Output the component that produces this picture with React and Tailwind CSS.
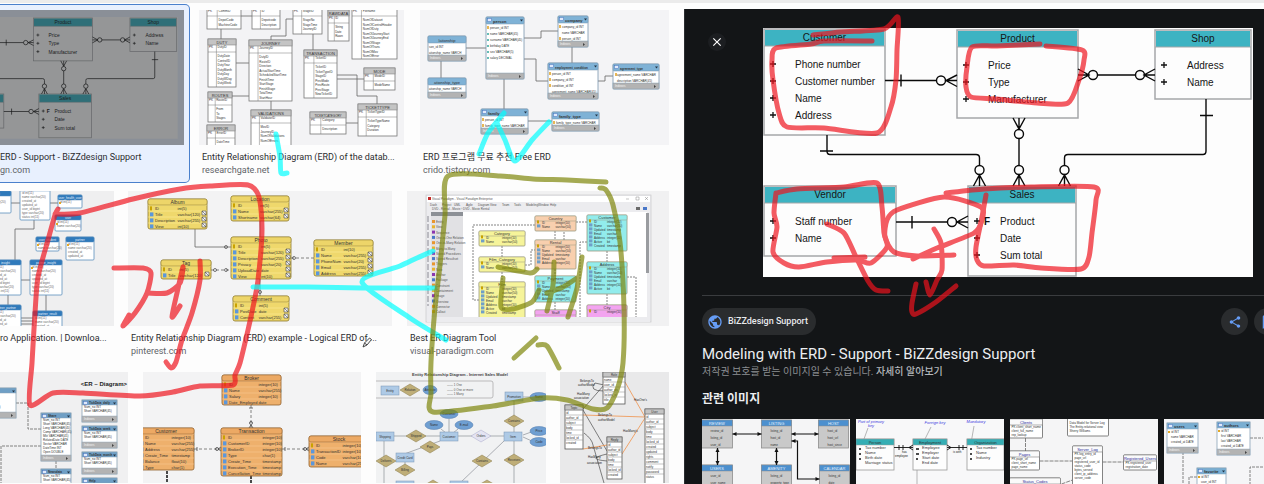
import React from "react";
import { MdPublic, MdShare, MdBookmarkBorder, MdClose } from "react-icons/md";

const SANS = "font-['Roboto','Noto_Sans_CJK_KR',sans-serif]";

/* ---------- drawing helpers ---------- */

function Entity({ x, y, w, h, t, rows = [], head = "#c4c4c4", body = "#ffffff", line = "#777777", ink = "#333333", hh = 6, pitch = 5, fs = 3, ts = 4, pad = 2, foot, r = 0, icon, split = 0.58, bands, titleInk, left }) {
  return (
    <g fontSize={fs} fill={ink}>
      <rect x={x} y={y} width={w} height={h} rx={r} fill={body} stroke={line} strokeWidth="0.8" />
      {bands && rows.map((_, i) => <line key={i} x1={x} x2={x + w} y1={y + hh + i * pitch} y2={y + hh + i * pitch} stroke={bands} strokeWidth="0.5" />)}
      {t && <rect x={x} y={y} width={w} height={hh} rx={r} fill={head} stroke={line} strokeWidth="0.5" />}
      {t && (
        <text x={left ? x + 7 : x + w / 2} y={y + hh - 1.5} textAnchor={left ? "start" : "middle"} fill={titleInk || ink} fontSize={ts} fontWeight={left ? 700 : 400}>{t}</text>
      )}
      {left && <rect x={x + 1.5} y={y + 1.5} width="4" height="3" fill="#dfe9fa" stroke="#4a73c0" strokeWidth="0.5" />}
      {left && <path d={`M${x + w - 4} ${y + 2.5}h3l-1.5 2z`} fill="#234" />}
      {rows.map((row, i) => {
        const [a, b] = row.split("|");
        const by = y + (t ? hh : 1) + pitch * (i + 1) - 1.2;
        return (
          <g key={i}>
            {icon && <rect x={x + 2} y={by - 3.4} width={i === 0 ? 2 : 3.4} height={Math.min(4, pitch - 1)} fill={i === 0 ? "#c9a200" : icon} />}
            {a && <text x={x + pad + (icon ? 5 : 0)} y={by}>{a}</text>}
            {b && <text x={x + w * split} y={by}>{b}</text>}
          </g>
        );
      })}
      {foot && <rect x={x} y={y + h - 6} width={w} height="6" fill="#b3b3b3" stroke={line} strokeWidth="0.4" />}
      {foot && <text x={x + 2} y={y + h - 2} fill="#f5f5f5">Indexes</text>}
      {foot && <path d={`M${x + w - 5} ${y + h - 4}l2 1.5l-2 1.5z`} fill="#444" />}
    </g>
  );
}

function Picture({ box, label, className, align = "xMidYMin", children }) {
  return (
    <svg viewBox={box} preserveAspectRatio={`${align} slice`} role="img" aria-label={label} className={`block w-full font-['Liberation_Sans',sans-serif] ${className}`}>
      {children}
    </svg>
  );
}

const Wire = ({ d, c = "#666666", w = 0.8, dash }) => <path d={d} fill="none" stroke={c} strokeWidth={w} strokeDasharray={dash} />;

/* ---------- sales model with crow's feet ---------- */

const salesTables = [
  { x: 764, y: 29, w: 121, h: 106, t: "Customer", tx: 795, px: 773, rows: ["Phone number", "Customer number", "Name", "Address"] },
  { x: 957, y: 30, w: 121, h: 88, t: "Product", tx: 988, px: 966, rows: ["Price", "Type", "Manufacturer"] },
  { x: 1155, y: 30, w: 96, h: 69, t: "Shop", tx: 1187, px: 1164, rows: ["Address", "Name"] },
  { x: 764, y: 186, w: 132, h: 70, t: "Vendor", tx: 795, px: 773, rows: ["Staff number", "Name"] },
  { x: 968, y: 186, w: 108, h: 90, t: "Sales", tx: 1000, px: 977, rows: ["Product", "Date", "Sum total"] },
];

function SalesModel({ size = 10 }) {
  return (
    <g fontSize={size}>
      <rect x="763" y="28" width="490" height="250" fill="#fdfdfd" />
      {salesTables.map((s) => (
        <g key={s.t} fill="#161616">
          <rect x={s.x} y={s.y} width={s.w} height={s.h} fill="#fdfdfd" stroke="#a5a7a9" strokeWidth="1.5" />
          <rect x={s.x + 1} y={s.y + 1} width={s.w - 2} height="16" fill="#3db3c2" />
          <line x1={s.x} x2={s.x + s.w} y1={s.y + 17} y2={s.y + 17} stroke="#a5a7a9" />
          <text x={s.x + s.w / 2} y={s.y + 12} textAnchor="middle">{s.t}</text>
          {s.rows.map((r, i) => (
            <g key={r}>
              <path d={`M${s.px - 3} ${s.y + 35 + i * 17}h6m-3 -3v6`} stroke="#111" strokeWidth="1.3" />
              <text x={s.tx} y={s.y + 39 + i * 17}>{r}</text>
            </g>
          ))}
        </g>
      ))}
      <text x="984" y="225" fontWeight="700" fill="#111">F</text>
      <g fill="none" stroke="#0a0a0a" strokeWidth="1.4">
        <path d="M885 80.500H936.500M901 74.500v12M946 80.500H957M957 75l-11 5.500l11 6" />
        <path d="M1078 69l11 6l-11 6M1078 75h11M1097.500 75H1135.500M1155 69l-11 6l11 6M1144 75h11" />
        <path d="M896 222H947.500M912 216v12.500M968 216l-11 6l11 6M957 222h11" />
        <path d="M827 135V151Q827 154.500 830 154.500H976Q979.500 154.500 979.500 158V165.500M820 151h13" />
        <path d="M1206 99V151Q1206 154.500 1203 154.500H1068Q1064.500 154.500 1064.500 158V165.500M1200 115.500h13" />
        <path d="M1019 138.500V165.500M1013 118l6 11l6-11M1019 118v11" />
        <path d="M973.500 186l6-11l6 11M979.500 175v11M1013 186l6-11l6 11M1019 175v11M1058.500 186l6-11l6 11M1064.500 175v11" />
        <circle cx="941" cy="80.500" r="4.500" /><circle cx="1093" cy="75" r="4.500" /><circle cx="1140" cy="75" r="4.500" />
        <circle cx="952" cy="222" r="4.500" /><circle cx="979.500" cy="170" r="4.500" /><circle cx="1019" cy="134" r="4.500" />
        <circle cx="1019" cy="170" r="4.500" /><circle cx="1064.500" cy="170" r="4.500" />
      </g>
    </g>
  );
}

/* ---------- result thumbnails ---------- */

function SelectedThumb() {
  return (
    <Picture box="0 10 184 135" align="xMaxYMin" label="Sales ERD" className="h-[135px]">
      <rect x="-400" y="0" width="900" height="200" fill="#e8f0fe" />
      <g transform="translate(33.5 18) scale(0.487) translate(-957 -30)"><SalesModel /></g>
      <rect x="-400" y="0" width="900" height="200" fill="#202124" opacity="0.47" />
    </Picture>
  );
}

const busTables = [
  [207, 8, 34, 21, null, ["PK|CommID", "", "|DepotCode", "|MachineCode"]],
  [252, 8, 28, 21, null, ["PK|ID", "", "|Depotcode", "|Description"]],
  [293, 8, 29, 26, null, ["PK|StageID", "", "|StageNo", "|StageTime", "|JourneyID"]],
  [328, 10, 21, 31, "RAWDATA", ["PK|ID", "", "|String", "|Date", "|Rawn"]],
  [352, 8, 45, 51, null, ["PK|Filename", "", "|NumOfDataset", "|NumOfControlHeader", "|NumOfDuty", "|NumOfJourneyStart", "|NumOfJourneyEnd", "|NumOfStage", "|NumOfTrans", "|NumOfMov", "|NumOfError"]],
  [208, 39, 28, 48, "DUTY", ["PK|DutyID", "", "|DutyDate", "|ControlID", "|DutyYear", "|DutyMonth", "|DutyDay", "|DutyWDay", "|DutyWeek"]],
  [249, 40, 43, 61, "JOURNEY", ["PK|JourneyID", "", "|DutyID", "|RouteID", "|Direction", "|ActualStartTime", "|ScheduledStartTime", "|FinishTime", "|StartStage", "|FinishStage", "|TotalTime", "|StartHour"]],
  [304, 50, 33, 48, "TRANSACTION", ["PK|TicketID", "", "|TicketID", "|TicketTypeID", "|StageID", "|PrevMode", "|PrevRoute", "|PrevStage", "|NewTicketID"]],
  [364, 68, 31, 22, "MODE", ["PK|ModeID", "", "|ModeName"]],
  [208, 92, 24, 30, "ROUTES", ["PK|RouteID", "", "|From", "|To", "|Stages"]],
  [251, 110, 40, 40, "VALIDATIONS", ["PK|ValidatorID", "", "|MovID", "|JourneyID", "|NumOfValidations", "|NumOfErrors"]],
  [207, 125, 28, 30, "ERROR", ["PK|ErrorID", "", "|DateTime"]],
  [310, 112, 36, 22, "TICKETCATEGORY", ["PK|Category", "", "|Description"]],
  [358, 104, 39, 32, "TICKETTYPE", ["PK|TicketTypeID", "", "|TicketTypeName", "|Category", "|Duration"]],
];

function BusThumb() {
  return (
    <Picture box="199 10 205 135" label="Bus database ERD" className="h-[135px]">
      <rect x="0" y="0" width="800" height="200" fill="#f3f3f5" />
      <Wire d="M241 16H252M221 29V39M236 63H249M232 96H249M271 101V110M271 40V36H286V19H293M313 34V50M337 75H357V96H377V104M337 79H364M346 123H358" />
      {busTables.map(([x, y, w, h, t, rows], i) => (
        <g key={i}>
          <Entity x={x} y={y} w={w} h={h} t={t} rows={rows} pad={1} ts={t && t.length > 11 ? 3 : 4} split={w > 36 ? 0.24 : 0.34} pitch={4.500} />
          <path d={`M${x + w * (w > 36 ? 0.21 : 0.3)} ${y + (t ? 6 : 0)}V${y + h}M${x} ${y + (t ? 13 : 8)}h${w}`} stroke="#777" strokeWidth="0.5" />
        </g>
      ))}
    </Picture>
  );
}

function PersonThumb() {
  const s = { head: "#7fb2d6", line: "#7896ad", foot: true, left: true, r: 1, pitch: 6, hh: 7, pad: 4 };
  return (
    <Picture box="420 10 249 135" label="Person ERD" className="h-[135px]">
      <rect x="300" y="0" width="500" height="200" fill="#f4f4f6" />
      <Wire d="M466 48H486M441 61V78M504 79V109M524 38H541V31H558M524 59H536V81H548M572 47V63M598 81H605V76H613M528 121H552" />
      <Entity {...s} x={486} y={17} w={38} h={62} t="person" rows={["person_id INT", "name VARCHAR(45)", "surname VARCHAR(45)", "birthday DATE", "sex VARCHAR(5)", "salary DECIMAL"]} />
      <Entity {...s} x={558} y={16} w={30} h={31} t="company" rows={["company_id INT", "name VARCHAR", "person_id INT"]} />
      <Entity {...s} ts={3} x={548} y={63} w={50} h={36} t="employment_condition" rows={["person_id INT", "company_id INT", "condition_id INT", "agreement_name VARCHAR(45)"]} />
      <Entity {...s} ts={3} x={613} y={64} w={46} h={25} t="agreement_type" rows={["agreement_name VARCHAR", "description VARCHAR(45)"]} />
      <Entity {...s} x={481} y={109} w={47} h={25} t="family" rows={["person_id INT", "family_type_name VARCHAR"]} />
      <Entity {...s} x={552} y={112} w={47} h={19} t="family_type" rows={["family_type_name VARCHAR"]} />
      <Entity {...s} x={428} y={36} w={38} h={25} t="lationship" left={false} pad={1} rows={["son_id INT", "ationship_name VARCH"]} />
      <Entity {...s} x={428} y={78} w={38} h={20} t="ationship_type" left={false} pad={1} rows={["ationship_name VARCH"]} />
      <path d="M488 26v3M560 25v3M560 37v3M550 72v3M550 78v3M550 84v3M616 73v3M483 118v3M483 124v3M554 121v3" stroke="#e0a020" strokeWidth="1.500" />
      <path d="M488 33v2M488 39v2M488 45v2M488 51v2M488 57v2" stroke="#35a6a0" strokeWidth="1.500" />
    </Picture>
  );
}

const blueTables = [
  [-20, 191, 31, 22, "insight"], [20, 186, 30, 34, "user"], [58, 195, 24, 13, "user_health_user"], [55, 215, 26, 16, "user"],
  [36, 237, 23, 14, "user_student"], [66, 237, 28, 23, "partner"], [-10, 260, 31, 35, "insight"], [30, 260, 32, 35, "partner_insight"],
  [-10, 305, 31, 30, "partner_partner"], [33, 311, 29, 20, "partner_result"],
];

function AppThumb() {
  return (
    <Picture box="0 191 114 135" align="xMinYMin" label="Application ERD" className="h-[135px]">
      <rect x="-100" y="100" width="400" height="300" fill="#efeff0" />
      <Wire d="M11 203H20M50 203H58M34 220V229H15V260M21 280H30M46 295V311M8 295V305M21 318H33M21 321H33M21 324H33" />
      {blueTables.map(([x, y, w, h, t], i) => (
        <Entity key={i} x={x} y={y} w={w} h={h} t={t} head="#2f7abb" titleInk="#e6f1fb" line="#5b8fbd" ink="#666666" r={1} hh={5} ts={3} pitch={4}
          rows={["id int(11)", "name varchar(20)", "created_at", "updated_at", "user_id bigint", "type varchar(20)", "status int(11)"].slice(0, Math.floor((h - 6) / 4))} />
      ))}
      <path d="M60 202v2M57 223v2M38 244v2M68 244v2M32 267v2" stroke="#e5a823" strokeWidth="2" />
    </Picture>
  );
}

const yellow = { head: "#edd569", body: "#efd86c", line: "#8d7a2e", icon: "#5b97dc", r: 2, bands: "#fff0a0", pitch: 6, fs: 4, ts: 5 };

function PhotoThumb() {
  return (
    <Picture box="128 191 264 135" label="Photo ERD" className="h-[135px]">
      <rect x="0" y="100" width="600" height="300" fill="#f3f3f4" />
      <Wire d="M195 229V247H231M260 221V237M260 279V296" />
      <Wire d="M211 270H231M291 258H314" dash="3 2" />
      <g fill="none" stroke="#444" strokeWidth="0.7"><circle cx="226" cy="247" r="1.500" /><circle cx="226" cy="270" r="1.500" /><circle cx="215" cy="270" r="1.500" /><circle cx="294" cy="258" r="1.500" /><circle cx="260" cy="292" r="1.500" /></g>
      <Entity {...yellow} x={148} y={199} w={59} h={30} t="Album" split={0.5} rows={["ID|int(5)", "Title|varchar(120)", "Description|varchar(255)", "View|int(10)"]} />
      <Entity {...yellow} x={231} y={196} w={58} h={25} t="Location" split={0.5} rows={["ID|int(5)", "Name|varchar(255)", "Shortname|varchar(64)"]} />
      <Entity {...yellow} x={231} y={237} w={60} h={42} t="Photo" split={0.5} rows={["ID|int(5)", "Title|varchar(120)", "Description|varchar(255)", "Privacy|varchar(20)", "UploadDate|date", "View|int(10)"]} />
      <Entity {...yellow} x={161} y={260} w={50} h={19} t="Tag" split={0.37} rows={["ID|int(5)", "Title|varchar(120)"]} />
      <Entity {...yellow} x={314} y={240} w={59} h={36} t="Member" split={0.5} rows={["ID|int(10)", "Name|varchar(255)", "PhoneNum|varchar(20)", "Email|varchar(255)", "Address|varchar(255)"]} />
      <Entity {...yellow} x={233} y={296} w={56} h={25} t="Comment" split={0.46} rows={["ID|int(5)", "PostDate|date", "Content|varchar(255)"]} />
      <g fill="#f6f6f6" stroke="#444" strokeWidth="0.6">
        {[[203, 212], [203, 218], [203, 224], [285, 209], [285, 215], [287, 250], [287, 256], [287, 262], [287, 268], [287, 274], [206, 273], [369, 253], [369, 259], [369, 265], [369, 271], [285, 309], [285, 315]].map(([x, y]) => (
          <path key={`${x}-${y}`} d={`M${x - 1} ${y - 1}h4v4h-4zl4 4`} />
        ))}
      </g>
    </Picture>
  );
}

function ToolThumb() {
  const b = { line: "#9a9a80", r: 1, pitch: 4, hh: 5, icon: "#6f9fc8", split: 0.5 };
  const R = ["ID|integer(10)", "Name|varchar(50)", "Updated|timestamp", "Email|varchar", "Address|integer(10)", "Active|bit", "Created|timestamp", "Store|integer(10)"];
  const list = [
    [535, 216, 41, 15, "Country", "#f8cfae", 2], [535, 240, 41, 29, "Rental", "#f8cfae", 5], [587, 215, 40, 36, "Customer", "#92ecec", 7],
    [587, 262, 40, 32, "Address", "#92ecec", 6], [535, 276, 41, 26, "Payment", "#92ecec", 5], [479, 231, 46, 15, "Category", "#f6f49a", 2],
    [479, 257, 46, 15, "Film_Category", "#f6f49a", 2], [479, 282, 46, 38, "Film", "#f6f49a", 7], [535, 310, 41, 10, "Staff", "#f3a4f0", 0], [587, 305, 40, 15, "City", "#f3a4f0", 1],
  ];
  return (
    <Picture box="407 191 262 135" label="ER diagram tool window" className="h-[135px]">
      <rect x="300" y="100" width="500" height="300" fill="#f1f1f2" />
      <rect x="426" y="195" width="225" height="127" fill="#ececef" stroke="#c9c9cc" strokeWidth="0.7" />
      <rect x="427" y="196" width="223" height="6" fill="#ffffff" />
      <rect x="428" y="197" width="3" height="3" fill="#c32a2a" />
      <g fontSize="3" fill="#555">
        <text x="432" y="200">Visual Paradigm - Visual Paradigm Enterprise</text>
        {["Dash", "Project", "UML", "Agile", "Diagram", "View", "Team", "Tools", "Modeling", "Window", "Help"].map((m, i) => <text key={m} x={430 + i * 12} y="206">{m}</text>)}
        <text x="432" y="210">DVD - Rental - Movie  ›  DVD - Movie Rental</text>
      </g>
      <rect x="463" y="212" width="184" height="105" fill="#ffffff" />
      <rect x="431" y="212" width="32" height="105" fill="#e1e1e4" />
      <rect x="431" y="212" width="32" height="4" fill="#8c9096" />
      <g fontSize="3" fill="#555">
        {["Entity", "View", "Sequence", "One-to-One Relation", "One-to-Many Relation", "Many-to-Many", "Stored Procedures", "Stored Resultset", "Triggers", "Note", "Anchor", "Package", "Constraint", "Containment", "Image", "Overview", "Connector", "Callout"].map((m, i) => (
          <g key={m}><rect x="432" y={220 + i * 5.300} width="3" height="3" fill={["#e8952e", "#e8b22e", "#8b35b0", "#4977c8"][i % 4]} /><text x="436" y={223 + i * 5.300}>{m}</text></g>
        ))}
      </g>
      <path d="M428 216v90" stroke="#8a8a93" strokeWidth="1" strokeDasharray="6 2" />
      <rect x="646" y="213" width="3" height="60" fill="#9a9ca0" /><rect x="636" y="207" width="4" height="3" fill="#6a6a6a" /><rect x="643" y="207" width="4" height="3" fill="#4977c8" />
      <path d="M626 199h3M636 197h3v3h-3zM645 197l3 3m0-3l-3 3" stroke="#888" strokeWidth="0.5" fill="none" />
      <Wire d="M535 225H473V300H479M502 246V257M502 272V282M555 231V240M555 269V276M525 265H531V250H535M587 222H564V240M607 251V262M607 294V305M627 277H636V317M587 242H580V317M555 302V310" dash="2 1" />
      {list.map(([x, y, w, h, t, c, n], i) => <Entity key={i} {...b} x={x} y={y} w={w} h={h} t={t} head={c} body={c} rows={R.slice(0, n)} />)}
      <rect x="427" y="317" width="223" height="5" fill="#ececef" />
    </Picture>
  );
}

function SchemaThumb() {
  const s = { head: "#6f9fc5", line: "#8ba2b5", hh: 5, pitch: 4, ts: 3, left: true, foot: true };
  const R = ["Num_no INT", "Short VARCHAR(45)", "Long VARCHAR(45)", "Comp VARCHAR(45)", "Mkt VARCHAR(45)", "RelatedDate DATE", "Sector VARCHAR", "DateTime INT", "Open DOUBLE"];
  return (
    <Picture box="0 373 128 111" align="xMinYMin" label="ER Diagram" className="h-[111px]">
      <rect x="-100" y="300" width="500" height="300" fill="#f0f0f1" />
      <text x="127" y="387" fontSize="6" fontWeight="700" textAnchor="end" fill="#222">&lt;ER ~ Diagram&gt;</text>
      <Wire d="M16 404H28V430H41M41 447H1V484M56 462V470" dash="3 1" />
      <Entity {...s} x={-30} y={389} w={46} h={30} t="Market" rows={R.slice(0, 4)} />
      <Entity {...s} x={41} y={414} w={30} h={48} t="Share" rows={R.slice(0, 9)} />
      <Entity {...s} x={41} y={470} w={30} h={22} t="Newsdata" rows={R.slice(0, 2)} />
      <Entity {...s} x={82} y={401} w={35} h={22} t="TickData_daily" rows={R.slice(0, 2)} />
      <Entity {...s} x={82} y={427} w={35} h={22} t="TickData_week" rows={R.slice(0, 2)} />
      <Entity {...s} x={82} y={453} w={35} h={22} t="TickData_month" rows={R.slice(0, 2)} />
      <Entity {...s} x={82} y={479} w={35} h={22} t="Help" rows={[]} />
    </Picture>
  );
}

function BrokerThumb() {
  const o = { ...yellow, head: "#eca964", body: "#eeb06c", line: "#8f5f2c", bands: "#f8cd98" };
  return (
    <Picture box="143 373 218 111" label="Broker ERD" className="h-[111px]">
      <rect x="0" y="300" width="600" height="300" fill="#f3f3f4" />
      <Wire d="M251 406V429M194 450H221M282 450H309" dash="3 2" />
      <path d="M167 472V484M251 477V484" stroke="#111" strokeWidth="1.500" strokeDasharray="3 1" />
      <g fill="none" stroke="#333" strokeWidth="0.7"><circle cx="251" cy="424" r="1.500" /><circle cx="217" cy="450" r="1.500" /><circle cx="305" cy="450" r="1.500" /><path d="M249 429l2-3l2 3M221 448l-3 2l3 2M309 448l-3 2l3 2M249 409h4M197 448v4M285 448v4" /></g>
      <Entity {...o} x={222} y={376} w={59} h={30} t="Broker" split={0.62} rows={["ID|integer(10)", "Name|varchar(255)", "Salary|integer(10)", "Date_Employed|date"]} />
      <Entity {...o} x={138} y={429} w={56} h={42} t="Customer" split={0.6} rows={["ID|integer(10)", "Name|varchar(255)", "Address|varchar(255)", "Create_Time|timestamp", "Balance|float(10)", "Type|char(1)"]} />
      <Entity {...o} x={221} y={429} w={61} h={48} t="Transaction" split={0.68} rows={["ID|integer(10)", "CustomerID|integer(10)", "BrokerID|integer(10)", "Type|char(1)", "Create_Time|timestamp", "Execution_Time|timestamp", "Cancellation_Time|timestamp"]} />
      <Entity {...o} x={309} y={437} w={60} h={31} t="Stock" split={0.56} rows={["ID|integer(10)", "TransactionID|integer(10)", "Code|varchar(10)", "Name|varchar(255)"]} />
    </Picture>
  );
}

function ModelThumb() {
  const rects = [[381, 387, "Entity"], [505, 393, "Promotion"], [440, 433, "Customer"], [504, 433, "Item"], [376, 433, "Shipping"], [396, 454, "Credit Card"], [396, 482, ""], [450, 482, ""]];
  const dia = [[410, 391, "Relation"], [416, 437, "Shipped"], [430, 448, "Pays"], [514, 422, "Contains"], [386, 462, "Delivers"], [405, 471, "Billing"], [482, 462, "Contains"], [514, 461, "Receives"], [433, 487, ""], [487, 487, ""]];
  const ell = [[430, 391, "Attribute"], [539, 398, "Name"], [449, 415, "Customer"], [434, 426, "Name"], [464, 426, "E-mail"], [539, 432, "Price"], [539, 443, "Code"]];
  return (
    <Picture box="376 373 170 111" label="Internet Sales Model" className="h-[111px]">
      <rect x="200" y="300" width="500" height="300" fill="#f1f2f3" />
      <text x="460" y="377" fontSize="4" fontWeight="700" textAnchor="middle" fill="#444">Entity Relationship Diagram - Internet Sales Model</text>
      <rect x="372" y="382" width="121" height="17" rx="2" fill="none" stroke="#a3a3a3" strokeWidth="0.7" />
      <g fontSize="3" fill="#555"><text x="447" y="387">——  1 One</text><text x="447" y="392">——  0 One or more</text><text x="447" y="396">——  1 Many</text></g>
      <Wire d="M449 420V433M441 430l5 4M458 430l-5 4M394 437H504M514 401V433M514 442V484M523 436L534 432M523 438L534 443M384 442V484M405 463V471M440 442L396 458M504 442L460 484M523 398H534" c="#7a7f88" w={0.6} />
      <g fontSize="3" textAnchor="middle" fill="#333">
        {rects.map(([x, y, t], i) => <g key={i}><rect x={x} y={y} width="18" height="9" fill="#aecae6" stroke="#7794b4" strokeWidth="0.5" /><text x={x + 9} y={y + 5.500}>{t}</text></g>)}
        {dia.map(([x, y, t], i) => <g key={i}><path d={`M${x - 10} ${y}l10-6l10 6l-10 6z`} fill="#bfae78" stroke="#8b7d4c" strokeWidth="0.5" /><text x={x} y={y + 1}>{t}</text></g>)}
        <path d="M471 437l10-6l10 6l-10 6z" fill="#e4e4f2" stroke="#a9a9c8" strokeWidth="0.5" /><text x="481" y="438">Orders</text>
        {ell.map(([x, y, t], i) => <g key={i}><ellipse cx={x} cy={y} rx={i === 0 ? 7 : 9} ry="4.500" fill="#6f9fd2" stroke="#4e78aa" strokeWidth="0.5" /><text x={x} y={y + 1}>{t}</text></g>)}
      </g>
    </Picture>
  );
}

function DomainThumb() {
  const s = { hh: 5, pitch: 5, ts: 3, bands: "#888888", line: "#555555", pad: 1 };
  const R = ["id", "author_id", "subject", "body", "time", "locked_id", "created", "updated", "rights", "comment", "notify", "password", "status"];
  return (
    <Picture box="560 373 109 111" label="Model associations" className="h-[111px]">
      <rect x="400" y="300" width="500" height="300" fill="#e9e9ea" />
      <Wire d="M583 410L604 386M604 386L595 384Q588 392 604 392M583 411L607 452M584 434Q592 440 593 446L604 484M607 455Q585 460 607 462" c="#333333" w={0.6} />
      <Wire d="M625 383L645 418M583 416L645 418M645 419L622 455M583 450L607 446" c="#f0924a" w={0.8} />
      <Entity {...s} x={603} y={373} w={22} h={32} t="Role" rows={["name", "user_id", "author_ids", "locked_id", "title"]} />
      <Entity {...s} x={565} y={406} w={18} h={44} t="Topic" rows={R.slice(0, 7)} />
      <Entity {...s} x={645} y={410} w={19} h={80} t="User" rows={R} />
      <Entity {...s} x={607} y={438} w={15} h={42} t="Reply" rows={R.slice(0, 7)} />
      <g fontSize="3" fill="#222">
        <text x="580" y="383">BelongsTo</text><text x="578" y="387">authorModel</text><text x="577" y="396">HasMany</text><text x="574" y="400">association</text>
        <text x="634" y="402">HasOne's</text><text x="598" y="417">BelongsTo</text><text x="598" y="422">authorModel</text><text x="623" y="433">HasMany's</text>
        <text x="588" y="459">HasMany</text><text x="587" y="465">association</text><text x="588" y="450">BelongsTo</text>
      </g>
    </Picture>
  );
}

/* ---------- related thumbnails ---------- */

function RentalThumb() {
  const s = { head: "#4c90cf", titleInk: "#e8f2fc", body: "#c9c9c9", line: "#8d8d8d", pitch: 7, pad: 9 };
  return (
    <Picture box="702 419 149 65" label="Rental ERD" className="h-[65px]">
      <rect x="600" y="400" width="400" height="200" fill="#f5f5f6" />
      <Entity {...s} x={702} y={420} w={31} h={28} t="REVIEW" rows={["review_id", "listing_id", "user_id"]} />
      <Entity {...s} x={762} y={420} w={30} h={28} t="LISTING" rows={["listing_id", "host_id", "name"]} />
      <Entity {...s} x={819} y={420} w={30} h={28} t="HOST" rows={["host_id", "host_url", "host_since"]} />
      <Entity {...s} x={702} y={465} w={31} h={28} t="USERS" rows={["user_id", "user_name"]} />
      <Entity {...s} x={762} y={465} w={30} h={28} t="AMENITY" rows={["listing_id", "property_type"]} />
      <Entity {...s} x={820} y={465} w={30} h={28} t="CALENDAR" rows={["listing_id", "date"]} />
      <path d="M733 434H762M792 434H819M718 448V465M777 448V465M792 441H798V479H820" fill="none" stroke="#111" strokeWidth="1.200" />
      <path d="M733 434l4-2v4zM762 434l-4-2v4zM792 434l4-2v4zM819 434l-4-2v4zM718 448l-2 4h4zM718 465l-2-4h4zM777 448l-2 4h4zM777 465l-2-4h4zM792 441l4-2v4zM820 479l-4-2v4z" fill="#111" />
    </Picture>
  );
}

function EmploymentThumb() {
  const s = { head: "#35aeb4", body: "#fdfdfd", line: "#999999", pitch: 5, pad: 9, fs: 4 };
  return (
    <Picture box="857 419 148 65" label="Employment ERD" className="h-[65px]">
      <rect x="700" y="400" width="400" height="200" fill="#f8f8f9" />
      <g fontSize="4" fontStyle="italic" fill="#3b38e0" textAnchor="middle"><text x="872" y="423">Part of primary</text><text x="872" y="427">key</text><text x="936" y="424">Foreign key</text><text x="977" y="423">Mandatory</text></g>
      <Wire d="M869 428L861 450M932 427L919 453M975 426L971 449M918 470V484" c="#888888" w={0.6} />
      <Entity {...s} x={857} y={439} w={38} h={31} t="Person" rows={["Tax number", "Name", "Birth date", "Marriage status"]} />
      <Entity {...s} x={914} y={439} w={34} h={31} t="Employment" rows={["Employee", "Employer", "Start date", "End date"]} />
      <Entity {...s} x={968} y={439} w={37} h={31} t="Organization" rows={["Tax number", "Name", "Industry"]} />
      <path d="M895 447.500H914M948 447.500H968M900 445v5M904 445v5M964 445v5M960 445v5M914 445l-4 2.500l4 2.500M948 445l4 2.500l-4 2.500" fill="none" stroke="#111" strokeWidth="0.900" />
      <path d="M860 449h2M860 454h2M860 459h2M917 449h3M917 454h3M917 459h2M971 449h2M971 454h2M971 459h2" stroke="#111" strokeWidth="1.500" />
      <g fontSize="3" fill="#222"><text x="903" y="453">has</text><text x="896" y="457">employee</text><text x="954" y="453">is with</text></g>
    </Picture>
  );
}

function LogThumb() {
  const s = { head: "#fafafa", titleInk: "#2a2a9a", line: "#666666", r: 1, pitch: 4 };
  return (
    <Picture box="1011 419 149 65" label="Server log ERD" className="h-[65px]">
      <rect x="900" y="400" width="400" height="200" fill="#f5f5f6" />
      <Wire d="M1027 438V451M1041 461H1074M1104 462H1125M1063 484L1074 480" dash="4 1" />
      <Entity {...s} x={1011} y={419} w={33} h={19} t="Clients" rows={["PK client_short_name", "client_full_name", "rep_lookup"]} />
      <Entity {...s} x={1069} y={412} w={41} h={24} rows={["", "", "Data Model for Server Log", "The Entity-relational view", "Sherry Williams", ""]} />
      <Entity {...s} x={1011} y={451} w={30} h={19} t="Pages" rows={["PK page_url", "client_short_name", "page_name"]} />
      <Entity {...s} x={1074} y={446} w={30} h={45} t="Server_Log" rows={["PK log_entry_id", "page_url", "registered_user_id", "status_code", "bytes_served", "client_ip_address", "server_code"]} />
      <Entity {...s} x={1125} y={455} w={33} h={15} t="Registered_Users" rows={["PK registered_user", "registration_date"]} />
      <Entity {...s} x={1011} y={478} w={51} h={15} t="Status_Codes" rows={[]} />
    </Picture>
  );
}

function UserThumb() {
  const s = { head: "#79aed2", line: "#8aa4b8", left: true, foot: true, pitch: 5, pad: 4 };
  return (
    <Picture box="1165 419 148 65" align="xMinYMin" label="Users ERD" className="h-[65px]">
      <rect x="1100" y="400" width="400" height="200" fill="#f5f5f7" />
      <Wire d="M1184 452V484M1251 438H1264M1264 467H1251V484M1198 477H1190V484" dash="3 1" />
      <Entity {...s} x={1168} y={423} w={31} h={30} t="users" rows={["id INT", "name VARCHAR", "created_at DATE"]} />
      <Entity {...s} x={1218} y={422} w={33} h={33} t="authors" rows={["id INT", "first VARCHAR", "last VARCHAR", "created_at DATE"]} />
      <Entity {...s} x={1198} y={468} w={29} h={30} t="favorite" rows={["id INT", "user_id INT"]} />
      <path d="M1170 431v2M1220 430v2M1200 476v2" stroke="#e5a823" strokeWidth="2" />
    </Picture>
  );
}

/* ---------- result cards ---------- */

function Result({ title, site, className = "", indent = "pl-[3px]", selected, children }) {
  return (
    <a href="#result" className={`block min-w-0 ${className} ${selected ? "-my-[6px] rounded-r-[5px] border border-l-0 border-[#4a80cc] bg-[#e8f0fe] pt-[5px] pr-[5px] pb-1" : ""}`}>
      {children}
      {title && (
        <div className={`mt-[6px] overflow-hidden text-[9px] leading-[13px] whitespace-nowrap ${indent}`}>
          <div className="text-[#2c2d30]">{title}</div>
          <div className="h-[13px] text-[#5f6368]">{site}</div>
        </div>
      )}
    </a>
  );
}

/* ---------- pen strokes ---------- */

function smooth(points) {
  let d = `M${points[0][0]} ${points[0][1]}`;
  for (let i = 0; i < points.length - 1; i++) {
    const p0 = points[i - 1] || points[i];
    const p1 = points[i];
    const p2 = points[i + 1];
    const p3 = points[i + 2] || p2;
    const k = 8;
    d += `C${p1[0] + (p2[0] - p0[0]) / k} ${p1[1] + (p2[1] - p0[1]) / k} ${p2[0] - (p3[0] - p1[0]) / k} ${p2[1] - (p3[1] - p1[1]) / k} ${p2[0]} ${p2[1]}`;
  }
  return d;
}

const pens = [
  { color: "#ef131d", width: 5, strokes: [
    [[58, 209], [55, 215], [48, 240], [38, 277], [35, 313], [32, 363], [30, 405], [53, 393], [83, 393], [140, 396], [173, 392], [200, 386], [233, 385], [235, 375], [240, 363], [248, 330], [253, 307], [258, 280], [262, 230], [259, 197], [248, 185], [210, 186], [180, 189], [133, 199], [80, 213], [55, 214]],
    [[114, 268], [143, 268], [151, 273], [147, 293], [135, 313], [123, 326], [129, 315]],
    [[148, 293], [167, 293], [180, 283], [183, 267], [177, 293], [172, 317], [180, 306]],
    [[200, 261], [200, 280], [192, 313], [182, 340], [176, 362], [171, 368], [166, 362]],
    [[813, 35], [841, 32], [884, 29], [898, 17], [897, 50], [896, 80], [891, 107], [877, 133], [824, 128], [787, 127], [779, 113], [773, 80], [772, 60], [776, 48], [811, 44], [824, 41], [872, 41]],
    [[1040, 44], [997, 46], [972, 47], [967, 67], [966, 87], [971, 97], [997, 99], [1037, 103], [1068, 103], [1079, 80], [1084, 60], [1082, 50], [1046, 46]],
    [[776, 193], [797, 189], [844, 187], [877, 183], [882, 207], [884, 233], [887, 247], [871, 263], [857, 260], [827, 262], [799, 267], [784, 263], [773, 252], [777, 227], [774, 213], [776, 193]],
    [[834, 258], [865, 257]],
    [[954, 255], [917, 256], [894, 252], [885, 237], [887, 220], [897, 210], [944, 197], [981, 207], [982, 220], [974, 233], [937, 248], [913, 259]],
    [[827, 224], [844, 233], [856, 257], [868, 281], [876, 290], [888, 291]],
    [[934, 229], [941, 243], [942, 270], [937, 280], [930, 295], [926, 282]],
    [[916, 284], [912, 303], [912, 312], [916, 314], [936, 302], [956, 286]],
    [[946, 193], [984, 189], [1031, 187], [1094, 187], [1096, 200], [1092, 233], [1089, 257], [1081, 269], [1041, 268], [1014, 265], [984, 266], [977, 260], [976, 247], [982, 217], [986, 195]],
  ] },
  { color: "#00ffff", width: 5, strokes: [
    [[276, 134], [280, 157], [281, 173], [287, 173]],
    [[479, 154], [488, 133], [504, 113]],
    [[497, 123], [505, 140], [515, 161], [532, 140], [549, 122]],
    [[253, 287], [307, 287], [362, 288], [435, 288]],
    [[433, 251], [417, 258], [400, 266], [362, 282], [410, 318], [446, 340]],
  ] },
  { color: "#7d8508", width: 5, strokes: [
    [[606, 182], [567, 180], [533, 179], [500, 176], [448, 176], [445, 215], [440, 265], [435, 308], [431, 362], [431, 393], [433, 412], [493, 406], [540, 398], [567, 400], [593, 409], [607, 408], [617, 390], [623, 363], [624, 308], [620, 242], [613, 205], [606, 190], [600, 188]],
    [[498, 267], [530, 273], [537, 269]],
    [[503, 278], [501, 307], [513, 309], [532, 302], [539, 290]],
    [[554, 262], [553, 285], [547, 311]],
    [[547, 293], [563, 287], [577, 278]],
    [[582, 257], [577, 288], [568, 317]],
    [[514, 358], [536, 338]],
    [[538, 345], [547, 346], [559, 368]],
  ] },
];

function PenLayer() {
  return (
    <svg viewBox="0 0 1264 484" preserveAspectRatio="none" aria-hidden="true" className="pointer-events-none absolute inset-0 size-full">
      {pens.map((p) => (
        <g key={p.color} fill="none" stroke={p.color} strokeWidth={p.width} strokeLinecap="round" strokeLinejoin="round" opacity="0.69">
          {p.strokes.map((s, i) => <path key={i} d={smooth(s)} />)}
        </g>
      ))}
      <path d="M363 347l1.500-4l5-5l2 1.500l-4.500 5.500zM364.500 343l2.500 2" fill="#f4f4f4" stroke="#333" strokeWidth="0.900" />
    </svg>
  );
}

export default function App() {
  return (
    <div className={`relative flex h-screen flex-col overflow-hidden bg-[#fdfdfd] ${SANS}`}>
      <div className="h-[3px] shrink-0 bg-[#ebebeb]" />
      <div className="grid min-h-0 flex-1 grid-cols-[minmax(0,684fr)_minmax(0,580fr)]">
        <main className="flex min-w-0 flex-col gap-[14px] pt-[7px] pr-[15px]">
          <div className="grid grid-cols-[minmax(0,199fr)_minmax(0,221fr)_minmax(0,249fr)]">
            <Result selected indent="" className="mr-[9px]" title="ERD - Support - BiZZdesign Support" site="gn.com"><SelectedThumb /></Result>
            <Result className="mr-[16px]" title="Entity Relationship Diagram (ERD) of the datab..." site="researchgate.net"><BusThumb /></Result>
            <Result title="ERD 프로그램 무료 추천 Free ERD" site="crido.tistory.com"><PersonThumb /></Result>
          </div>
          <div className="grid grid-cols-[minmax(0,128fr)_minmax(0,279fr)_minmax(0,262fr)]">
            <Result indent="" className="mr-[14px]" title="ro Application. | Downloa..." site=""><AppThumb /></Result>
            <Result className="mr-[15px]" title="Entity Relationship Diagram (ERD) example - Logical ERD of ..." site="pinterest.com"><PhotoThumb /></Result>
            <Result title="Best ER Diagram Tool" site="visual-paradigm.com"><ToolThumb /></Result>
          </div>
          <div className="grid grid-cols-[minmax(0,143fr)_minmax(0,233fr)_minmax(0,184fr)_minmax(0,109fr)]">
            <Result className="mr-[15px]"><SchemaThumb /></Result>
            <Result className="mr-[15px]"><BrokerThumb /></Result>
            <Result className="mr-[14px]"><ModelThumb /></Result>
            <Result><DomainThumb /></Result>
          </div>
        </main>

        <aside className="mt-[6px] min-w-0 overflow-hidden border-l border-[#2c2e31] bg-[#131517] pl-[17px]">
          <div className="flex items-start pt-[19px] pr-[11px] pl-[6px]">
            <button aria-label="Close" className="mt-[5px] mr-[37px] flex size-[18px] shrink-0 items-center justify-center rounded-full bg-[#1c1e21] text-white">
              <MdClose size={14} />
            </button>
            <div className="min-w-0 flex-1">
              <Picture box="763 28 490 249" label="Modeling with ERD" className="h-[249px]"><SalesModel /></Picture>
            </div>
          </div>
          <div className="mt-[18px] h-px bg-[#3a3c3f]" />
          <div className="mt-[12px] flex items-center overflow-hidden">
            <a href="#source" className="flex h-[27px] items-center gap-[5px] rounded-full bg-[#2a2c2e] pr-2 pl-[5px] text-[9px] font-medium text-[#e8eaed]">
              <MdPublic size={16} className="text-[#669df6]" />
              BiZZdesign Support
            </a>
            <button aria-label="Share" className="ml-auto flex size-[27px] shrink-0 items-center justify-center rounded-full bg-[#2a2c2e] text-[#669df6]">
              <MdShare size={14} />
            </button>
            <button aria-label="Save" className="-mr-[17px] ml-[6px] flex size-[27px] shrink-0 items-center justify-center rounded-full bg-[#2a2c2e] text-[#669df6]">
              <MdBookmarkBorder size={18} />
            </button>
          </div>
          <h1 className="mt-[9px] text-[15px] leading-[20px] text-[#eceef1]">Modeling with ERD - Support - BiZZdesign Support</h1>
          <p className="mt-px text-[10px] leading-[14px] text-[#8b8e92]">
            저작권 보호를 받는 이미지일 수 있습니다. <a href="#more" className="font-medium text-[#b4b7bb]">자세히 알아보기</a>
          </p>
          <h2 className="mt-[12px] text-[12px] leading-[16px] font-bold text-[#eceef1]">관련 이미지</h2>
          <div className="mt-[12px] flex gap-[6px]">
            {[RentalThumb, EmploymentThumb, LogThumb, UserThumb].map((Thumb, i) => (
              <a key={i} href="#related" className="block w-[148px] shrink-0"><Thumb /></a>
            ))}
          </div>
        </aside>
      </div>
      <PenLayer />
    </div>
  );
}
